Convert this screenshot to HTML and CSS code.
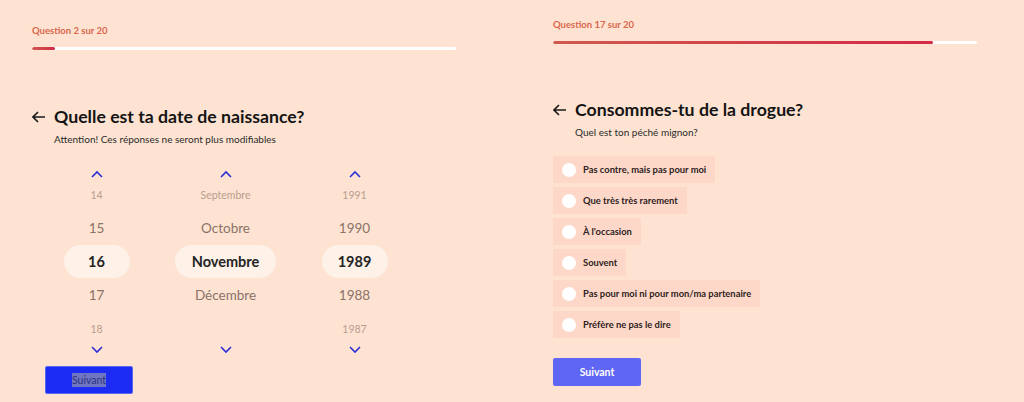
FILE: index.html
```html
<!DOCTYPE html>
<html lang="fr">
<head>
    <meta charset="UTF-8">
    <meta name="viewport" content="width=device-width, initial-scale=1.0">
    <title>Questionnaire</title>
    <link rel="stylesheet" href="styles.css">
</head>
<body>
    <main class="screens">
        <section class="panel panel-left">
            <p class="step">Question 2 sur 20</p>
            <div class="progress"><div class="progress-fill" style="width: 5.4%"></div></div>

            <div class="question">
                <svg class="back" viewBox="0 0 14 12" width="14" height="12"><path d="M13 6H1.5M6 1L1 6l5 5" fill="none" stroke="#1a1a1a" stroke-width="1.6"/></svg>
                <h2>Quelle est ta date de naissance?</h2>
            </div>
            <p class="hint">Attention! Ces réponses ne seront plus modifiables</p>

            <div class="picker">
                <div class="wheel">
                    <svg class="chev chev-up" viewBox="0 0 12 8" width="12" height="8"><path d="M1 7l5-5 5 5" fill="none" stroke="#2c2fd6" stroke-width="1.6"/></svg>
                    <div class="item far">14</div>
                    <div class="item near">15</div>
                    <div class="item current"><span>16</span></div>
                    <div class="item near">17</div>
                    <div class="item far">18</div>
                    <svg class="chev chev-down" viewBox="0 0 12 8" width="12" height="8"><path d="M1 1l5 5 5-5" fill="none" stroke="#2c2fd6" stroke-width="1.6"/></svg>
                </div>
                <div class="wheel">
                    <svg class="chev chev-up" viewBox="0 0 12 8" width="12" height="8"><path d="M1 7l5-5 5 5" fill="none" stroke="#2c2fd6" stroke-width="1.6"/></svg>
                    <div class="item far">Septembre</div>
                    <div class="item near">Octobre</div>
                    <div class="item current wide"><span>Novembre</span></div>
                    <div class="item near">Décembre</div>
                    <div class="item far"></div>
                    <svg class="chev chev-down" viewBox="0 0 12 8" width="12" height="8"><path d="M1 1l5 5 5-5" fill="none" stroke="#2c2fd6" stroke-width="1.6"/></svg>
                </div>
                <div class="wheel">
                    <svg class="chev chev-up" viewBox="0 0 12 8" width="12" height="8"><path d="M1 7l5-5 5 5" fill="none" stroke="#2c2fd6" stroke-width="1.6"/></svg>
                    <div class="item far">1991</div>
                    <div class="item near">1990</div>
                    <div class="item current"><span>1989</span></div>
                    <div class="item near">1988</div>
                    <div class="item far">1987</div>
                    <svg class="chev chev-down" viewBox="0 0 12 8" width="12" height="8"><path d="M1 1l5 5 5-5" fill="none" stroke="#2c2fd6" stroke-width="1.6"/></svg>
                </div>
            </div>

            <button class="next next-strong" type="button"><span class="selected">Suivant</span></button>
        </section>

        <section class="panel panel-right">
            <p class="step">Question 17 sur 20</p>
            <div class="progress"><div class="progress-fill" style="width: 89.6%"></div></div>

            <div class="question">
                <svg class="back" viewBox="0 0 14 12" width="14" height="12"><path d="M13 6H1.5M6 1L1 6l5 5" fill="none" stroke="#1a1a1a" stroke-width="1.6"/></svg>
                <h2>Consommes-tu de la drogue?</h2>
            </div>
            <p class="hint">Quel est ton péché mignon?</p>

            <ul class="options">
                <li class="option"><span class="radio"></span>Pas contre, mais pas pour moi</li>
                <li class="option"><span class="radio"></span>Que très très rarement</li>
                <li class="option"><span class="radio"></span>À l'occasion</li>
                <li class="option"><span class="radio"></span>Souvent</li>
                <li class="option"><span class="radio"></span>Pas pour moi ni pour mon/ma partenaire</li>
                <li class="option"><span class="radio"></span>Préfère ne pas le dire</li>
            </ul>

            <button class="next" type="button">Suivant</button>
        </section>
    </main>
</body>
</html>
```

FILE: styles.css
```css
body {
    margin: 0;
    font-family: Lato, "Noto Sans", sans-serif;
    background: #fee3d2;
    color: #1a1a1a;
}
.screens {
    display: flex;
    height: 402px;
    overflow: hidden;
}
.panel {
    width: 512px;
    box-sizing: border-box;
}
.panel-left {
    padding: 25px 0 0 32px;
}
.panel-right {
    padding: 19px 0 0 41px;
}
.step {
    margin: 0;
    font-size: 9.5px;
    font-weight: 700;
    color: #d9674c;
    line-height: 12px;
}
.progress {
    width: 424px;
    height: 3px;
    margin-top: 10px;
    background: #fff;
    border-radius: 2px;
    overflow: hidden;
}
.progress-fill {
    height: 100%;
    background: linear-gradient(90deg, #cf5a4e, #d42a48);
    border-radius: 2px;
}
.question {
    display: flex;
    align-items: center;
    gap: 8px;
}
.panel-left .question {
    margin-top: 55px;
}
.panel-right .question {
    margin-top: 54px;
}
.back {
    flex: none;
}
h2 {
    margin: 0;
    font-size: 17.7px;
    font-weight: 700;
    line-height: 24px;
    color: #141414;
}
.hint {
    margin: 3px 0 0 22px;
    font-size: 10px;
    line-height: 14px;
    color: #2b2b2b;
}

/* date picker */
.picker {
    display: grid;
    grid-template-columns: repeat(3, 129px);
    margin-top: 21px;
}
.wheel {
    display: flex;
    flex-direction: column;
    align-items: center;
}
.chev {
    display: block;
    height: 14px;
}
.chev-up {
    margin-bottom: -3px;
}
.chev-down {
    margin-top: -3px;
}
.item {
    height: 33.5px;
    display: flex;
    align-items: center;
    justify-content: center;
}
.item.far {
    font-size: 10.5px;
    color: #b89d90;
}
.item.near {
    font-size: 13.5px;
    color: #8a7268;
}
.item.current span {
    display: flex;
    align-items: center;
    justify-content: center;
    width: 66px;
    height: 33px;
    border-radius: 17px;
    background: #fdf1e8;
    font-size: 14.5px;
    font-weight: 700;
    color: #242424;
}
.item.current.wide span {
    width: 101px;
}

/* options */
.options {
    list-style: none;
    margin: 17px 0 0;
    padding: 0;
    display: flex;
    flex-direction: column;
    align-items: flex-start;
    gap: 4px;
}
.option {
    display: flex;
    align-items: center;
    height: 27px;
    padding: 0 9px 0 9px;
    background: #fdd8c8;
    font-size: 9.4px;
    font-weight: 700;
    color: #2e2222;
}
.radio {
    width: 14px;
    height: 14px;
    border-radius: 50%;
    background: #fff;
    margin-right: 7px;
}

/* buttons */
.next {
    display: block;
    width: 88px;
    height: 28px;
    border: none;
    border-radius: 2px;
    background: #5f66f4;
    color: #fff;
    font-family: inherit;
    font-size: 10.5px;
    font-weight: 700;
    cursor: pointer;
}
.panel-right .next {
    margin-top: 20px;
}
.next-strong {
    margin: 9px 0 0 13px;
    background: #1d2cf3;
    border: 1px solid #5566f0;
    height: 28px;
}
.selected {
    background: #6e75c2;
    color: #2f3480;
    font-weight: 400;
    padding: 1px 0;
}
```
